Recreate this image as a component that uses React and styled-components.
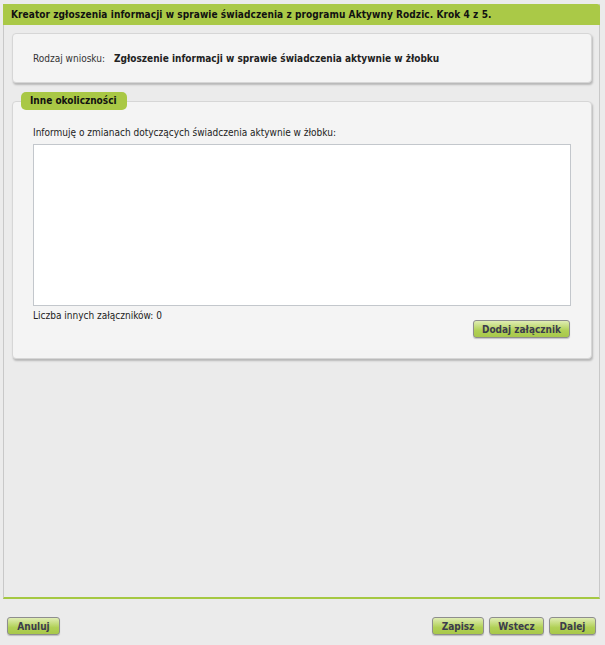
import React from "react";
import styled, { createGlobalStyle } from "styled-components";

const GlobalStyle = createGlobalStyle`
  html, body {
    margin: 0;
    padding: 0;
    background: #ebebeb;
  }
  body {
    font-family: "DejaVu Sans Condensed", "DejaVu Sans", sans-serif;
    font-size: 10px;
    color: #222;
  }
`;

function App() {
  return (
    <>
      <GlobalStyle />
      <Page>
        <Wizard>
          <Header>
            Kreator zgłoszenia informacji w sprawie świadczenia z programu Aktywny Rodzic. Krok 4 z 5.
          </Header>
          <Body>
            <Card>
              <KindRow>
                <KindLabel>Rodzaj wniosku:</KindLabel>
                <KindValue>Zgłoszenie informacji w sprawie świadczenia aktywnie w żłobku</KindValue>
              </KindRow>
            </Card>
            <Fieldset>
              <Legend>Inne okoliczności</Legend>
              <FieldCard>
                <FieldLabel>Informuję o zmianach dotyczących świadczenia aktywnie w żłobku:</FieldLabel>
                <TextArea />
                <Count>Liczba innych załączników: 0</Count>
                <AttachRow>
                  <Button $w={97}>Dodaj załącznik</Button>
                </AttachRow>
              </FieldCard>
            </Fieldset>
          </Body>
        </Wizard>
        <Footer>
          <Button $w={53}>Anuluj</Button>
          <FooterRight>
            <Button $w={52}>Zapisz</Button>
            <Button $w={55}>Wstecz</Button>
            <Button $w={47}>Dalej</Button>
          </FooterRight>
        </Footer>
      </Page>
    </>
  );
}

export default App;

const Page = styled.div`
  width: 605px;
  height: 645px;
  padding-top: 4px;
  box-sizing: border-box;
`;

const Wizard = styled.div`
  margin-left: 3px;
  width: 597px;
  height: 595px;
  box-sizing: border-box;
  border-left: 1px solid #c8c8c8;
  border-right: 1px solid #c8c8c8;
  border-bottom: 2px solid #a5c842;
  display: flex;
  flex-direction: column;
`;

const Header = styled.div`
  height: 21px;
  line-height: 21px;
  background: #aac947;
  border-top-right-radius: 3px;
  padding-left: 8px;
  margin-left: -1px;
  margin-right: -1px;
  font-weight: bold;
  font-size: 10px;
  letter-spacing: 0.08px;
  color: #111;
  white-space: nowrap;
  overflow: hidden;
`;

const Body = styled.div`
  padding: 8px 7px 0 8px;
  display: flex;
  flex-direction: column;
`;

const Card = styled.div`
  background: #f4f4f4;
  border: 1px solid #d6d6d6;
  border-radius: 4px;
  box-shadow: 1px 2px 2px rgba(0, 0, 0, 0.22);
  height: 50px;
  box-sizing: border-box;
  display: flex;
  align-items: center;
  padding-left: 20px;
`;

const KindRow = styled.div`
  display: flex;
  align-items: baseline;
  gap: 9px;
`;

const KindLabel = styled.span`
  color: #333;
`;

const KindValue = styled.span`
  font-weight: bold;
  color: #222;
`;

const Fieldset = styled.div`
  margin-top: 9px;
  display: flex;
  flex-direction: column;
`;

const Legend = styled.div`
  align-self: flex-start;
  margin-left: 9px;
  height: 18px;
  line-height: 18px;
  padding: 0 10px 0 9px;
  background: #a9c845;
  border-radius: 5px;
  font-weight: bold;
  font-size: 10px;
  color: #111;
  position: relative;
  z-index: 1;
  margin-bottom: -9px;
`;

const FieldCard = styled(Card)`
  height: 258px;
  display: block;
  padding: 24px 20px 0 20px;
`;

const FieldLabel = styled.div`
  line-height: 14px;
  color: #222;
`;

const TextArea = styled.div`
  margin-top: 4px;
  height: 160px;
  background: #fff;
  border: 1px solid #c3c7cc;
`;

const Count = styled.div`
  margin-top: 3px;
  line-height: 14px;
`;

const AttachRow = styled.div`
  display: flex;
  justify-content: flex-end;
  margin-top: -3px;
  padding-right: 1px;
`;

const Button = styled.button`
  height: 18px;
  padding: 0;
  ${(p) => (p.$w ? `width: ${p.$w}px;` : "")}
  border: 1px solid #8e8e8e;
  border-radius: 3px;
  background: linear-gradient(#e0edb4, #b0d055 60%, #a8c84a);
  font-family: "DejaVu Sans Condensed", "DejaVu Sans", sans-serif;
  font-size: 10px;
  font-weight: bold;
  color: #3c3c4c;
  box-shadow: 0 1px 1px rgba(0, 0, 0, 0.2);
  cursor: pointer;
`;

const Footer = styled.div`
  margin-top: 18px;
  padding: 0 9px 0 7px;
  display: flex;
  justify-content: space-between;
`;

const FooterRight = styled.div`
  display: flex;
  gap: 5px;
`;
